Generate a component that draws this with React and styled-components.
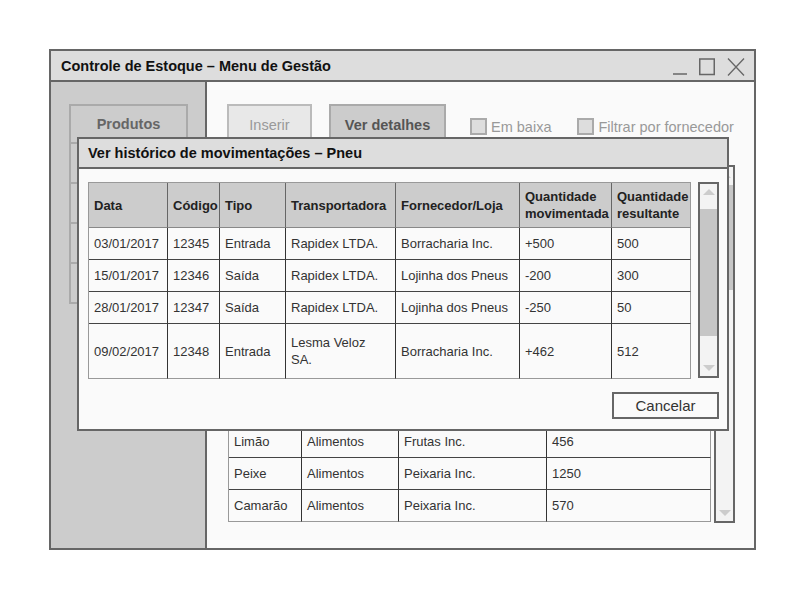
import React from 'react';
import styled, { createGlobalStyle } from 'styled-components';

const GlobalStyle = createGlobalStyle`
	body {
		margin: 0;
		background: #fff;
		font-family: "Liberation Sans", Arial, sans-serif;
	}
`;

const Page = styled.div`
	padding: 49px 0 0 49px;
`;

const Window = styled.div`
	position: relative;
	width: 707px;
	height: 501px;
	box-sizing: border-box;
	border: 2px solid #666;
	background: #fafafa;
	display: flex;
	flex-direction: column;
`;

const TitleBar = styled.div`
	height: 31px;
	flex-shrink: 0;
	box-sizing: border-box;
	border-bottom: 2px solid #666;
	background: #ddd;
	display: flex;
	align-items: center;
	justify-content: space-between;
	padding: 0 9px 0 10px;
`;

const Title = styled.div`
	font-weight: bold;
	font-size: 14.5px;
	color: #111;
`;

const Controls = styled.div`
	display: flex;
	align-items: center;
	gap: 12px;
	margin-top: 3px;
	svg {
		display: block;
	}
`;

const Body = styled.div`
	flex: 1;
	display: flex;
	min-height: 0;
`;

const Sidebar = styled.div`
	width: 156px;
	flex-shrink: 0;
	box-sizing: border-box;
	border-right: 2px solid #666;
	background: #ccc;
	padding: 22px 0 0 18px;
	display: flex;
	flex-direction: column;
`;

const NavButton = styled.div`
	width: 119px;
	height: 40px;
	box-sizing: border-box;
	border: 2px solid #aaa;
	background: #ccc;
	color: #666;
	font-weight: bold;
	font-size: 14.5px;
	display: flex;
	align-items: center;
	justify-content: center;
	& + & {
		border-top: 0;
	}
`;

const Main = styled.div`
	flex: 1;
	min-width: 0;
	padding: 22px 20px 0 21px;
	display: flex;
	flex-direction: column;
`;

const Toolbar = styled.div`
	display: flex;
	align-items: center;
	white-space: nowrap;
`;

const ToolButton = styled.div`
	flex-shrink: 0;
	width: ${(p) => p.$width}px;
	height: 41px;
	box-sizing: border-box;
	border: 2px solid ${(p) => (p.$active ? '#aaa' : '#bbb')};
	background: ${(p) => (p.$active ? '#ccc' : '#e8e8e8')};
	color: ${(p) => (p.$active ? '#555' : '#999')};
	font-weight: ${(p) => (p.$active ? 'bold' : 'normal')};
	font-size: 14.5px;
	display: flex;
	align-items: center;
	justify-content: center;
	margin-right: ${(p) => p.$gap}px;
	margin-left: -1px;
`;

const CheckLabel = styled.label`
	flex-shrink: 0;
	display: flex;
	align-items: center;
	gap: 4px;
	font-size: 14.5px;
	color: #999;
	margin-top: 4px;
	margin-right: 26px;
	&:last-child {
		margin-right: 0;
	}
`;

const CheckBox = styled.span`
	width: 17px;
	height: 17px;
	box-sizing: border-box;
	border: 2px solid #aaa;
	background: #ddd;
`;

const TableArea = styled.div`
	margin-top: 20px;
	display: flex;
	gap: 3px;
	align-items: flex-start;
`;

const Grid = styled.table`
	width: ${(p) => p.$width}px;
	flex-shrink: 0;
	table-layout: fixed;
	border-collapse: separate;
	border-spacing: 0;
	border-top: 1px solid #999;
	border-left: 1px solid #999;
	font-size: 13px;
	color: #333;
	th,
	td {
		padding: 0 5px;
		text-align: left;
		border-right: 1px solid #333;
		border-bottom: 1px solid #444;
		line-height: 17px;
		vertical-align: middle;
	}
	th {
		background: #ccc;
		color: #222;
		font-weight: bold;
		border-right-color: #666;
		border-bottom-color: #888;
	}
	th:last-child,
	td:last-child {
		border-right-color: #999;
	}
	tbody tr:last-child td {
		border-bottom-color: #999;
	}
`;

const Row = styled.tr`
	height: ${(p) => p.$h}px;
`;

const Scroll = styled.div`
	width: 21px;
	height: ${(p) => p.$h}px;
	flex-shrink: 0;
	box-sizing: border-box;
	border: 2px solid #666;
	background: #f3f3f3;
	display: flex;
	flex-direction: column;
`;

const ScrollTop = styled.div`
	height: ${(p) => p.$h}px;
	display: flex;
	justify-content: center;
	padding-top: 5px;
	box-sizing: border-box;
`;

const Thumb = styled.div`
	height: ${(p) => p.$h}px;
	background: #c6c6c6;
`;

const ScrollRest = styled.div`
	flex: 1;
	display: flex;
	justify-content: center;
	align-items: flex-end;
	padding-bottom: 5px;
`;

const Arrow = styled.span`
	width: 0;
	height: 0;
	border-left: 6px solid transparent;
	border-right: 6px solid transparent;
	${(p) => (p.$down ? 'border-top' : 'border-bottom')}: 6px solid #ccc;
`;

const Dialog = styled.div`
	position: absolute;
	left: 26px;
	top: 86px;
	width: 652px;
	height: 294px;
	box-sizing: border-box;
	border: 2px solid #666;
	background: #fafafa;
	display: flex;
	flex-direction: column;
`;

const DialogTitle = styled.div`
	height: 30px;
	box-sizing: border-box;
	border-bottom: 2px solid #666;
	background: #ddd;
	padding: 0 9px;
	display: flex;
	align-items: center;
	font-weight: bold;
	font-size: 14.5px;
	color: #111;
`;

const DialogBody = styled.div`
	padding: 13px 8px 0 9px;
	display: flex;
	flex-direction: column;
`;

const DialogContent = styled.div`
	display: flex;
	gap: 7px;
	align-items: flex-start;
`;

const Footer = styled.div`
	display: flex;
	justify-content: flex-end;
	margin-top: 13px;
`;

const CancelButton = styled.div`
	width: 107px;
	height: 27px;
	box-sizing: border-box;
	border: 2px solid #666;
	background: #fafafa;
	color: #333;
	font-size: 15px;
	display: flex;
	align-items: center;
	justify-content: center;
`;

const ScrollBar = ({ h, top, thumb }) => (
	<Scroll $h={h}>
		<ScrollTop $h={top}>
			<Arrow />
		</ScrollTop>
		<Thumb $h={thumb} />
		<ScrollRest>
			<Arrow $down />
		</ScrollRest>
	</Scroll>
);

const history = [
	['03/01/2017', '12345', 'Entrada', 'Rapidex LTDA.', 'Borracharia Inc.', '+500', '500'],
	['15/01/2017', '12346', 'Saída', 'Rapidex LTDA.', 'Lojinha dos Pneus', '-200', '300'],
	['28/01/2017', '12347', 'Saída', 'Rapidex LTDA.', 'Lojinha dos Pneus', '-250', '50'],
	['09/02/2017', '12348', 'Entrada', 'Lesma Veloz SA.', 'Borracharia Inc.', '+462', '512']
];

const products = [
	['Pneu', 'Automotivo', 'Borracharia Inc.', '512'],
	['Arroz', 'Alimentos', 'Grãos Inc.', '800'],
	['Feijão', 'Alimentos', 'Grãos Inc.', '640'],
	['Óleo', 'Automotivo', 'Lubrax SA.', '120'],
	['Banana', 'Alimentos', 'Frutas Inc.', '300'],
	['Maçã', 'Alimentos', 'Frutas Inc.', '210'],
	['Laranja', 'Alimentos', 'Frutas Inc.', '380'],
	['Limão', 'Alimentos', 'Frutas Inc.', '456'],
	['Peixe', 'Alimentos', 'Peixaria Inc.', '1250'],
	['Camarão', 'Alimentos', 'Peixaria Inc.', '570']
];

const App = () => {
	return (
		<Page>
			<GlobalStyle />
			<Window>
				<TitleBar>
					<Title>Controle de Estoque – Menu de Gestão</Title>
					<Controls>
						<svg width="14" height="18" viewBox="0 0 14 18">
							<line x1="0" y1="16" x2="14" y2="16" stroke="#666" strokeWidth="1.5" />
						</svg>
						<svg width="16" height="18" viewBox="0 0 16 18">
							<rect x="0.75" y="1" width="14.5" height="15.5" fill="none" stroke="#666" strokeWidth="1.5" />
						</svg>
						<svg width="18" height="18" viewBox="0 0 18 18">
							<path d="M1 0.5 L17 17.5 M17 0.5 L1 17.5" stroke="#666" strokeWidth="1.3" fill="none" />
						</svg>
					</Controls>
				</TitleBar>
				<Body>
					<Sidebar>
						<NavButton>Produtos</NavButton>
						<NavButton>Fornecedores</NavButton>
						<NavButton>Transportes</NavButton>
						<NavButton>Movimentos</NavButton>
						<NavButton>Relatórios</NavButton>
					</Sidebar>
					<Main>
						<Toolbar>
							<ToolButton $width={85} $gap={18}>
								Inserir
							</ToolButton>
							<ToolButton $width={117} $gap={24} $active>
								Ver detalhes
							</ToolButton>
							<CheckLabel>
								<CheckBox />
								Em baixa
							</CheckLabel>
							<CheckLabel>
								<CheckBox />
								Filtrar por fornecedor
							</CheckLabel>
						</Toolbar>
						<TableArea>
							<Grid $width={482}>
								<colgroup>
									<col style={{ width: 73 }} />
									<col style={{ width: 97 }} />
									<col style={{ width: 148 }} />
									<col style={{ width: 164 }} />
								</colgroup>
								<thead>
									<Row $h={36}>
										<th>Nome</th>
										<th>Categoria</th>
										<th>Fornecedor</th>
										<th>Quantidade</th>
									</Row>
								</thead>
								<tbody>
									{products.map((p) => (
										<Row $h={32} key={p[0]}>
											{p.map((c, i) => (
												<td key={i}>{c}</td>
											))}
										</Row>
									))}
								</tbody>
							</Grid>
							<ScrollBar h={358} top={18} thumb={105} />
						</TableArea>
					</Main>
				</Body>
				<Dialog>
					<DialogTitle>Ver histórico de movimentações – Pneu</DialogTitle>
					<DialogBody>
						<DialogContent>
							<Grid $width={602}>
								<colgroup>
									<col style={{ width: 79 }} />
									<col style={{ width: 52 }} />
									<col style={{ width: 66 }} />
									<col style={{ width: 110 }} />
									<col style={{ width: 124 }} />
									<col style={{ width: 92 }} />
									<col style={{ width: 79 }} />
								</colgroup>
								<thead>
									<Row $h={45}>
										<th>Data</th>
										<th>Código</th>
										<th>Tipo</th>
										<th>Transportadora</th>
										<th>Fornecedor/Loja</th>
										<th>Quantidade movimentada</th>
										<th>Quantidade resultante</th>
									</Row>
								</thead>
								<tbody>
									{history.map((r, idx) => (
										<Row $h={idx === 3 ? 55 : 32} key={r[1]}>
											{r.map((c, i) => (
												<td key={i}>{c === 'Lesma Veloz SA.' ? <>Lesma Veloz<br />SA.</> : c}</td>
											))}
										</Row>
									))}
								</tbody>
							</Grid>
							<ScrollBar h={196} top={25} thumb={127} />
						</DialogContent>
						<Footer>
							<CancelButton>Cancelar</CancelButton>
						</Footer>
					</DialogBody>
				</Dialog>
			</Window>
		</Page>
	);
};

export default App;
